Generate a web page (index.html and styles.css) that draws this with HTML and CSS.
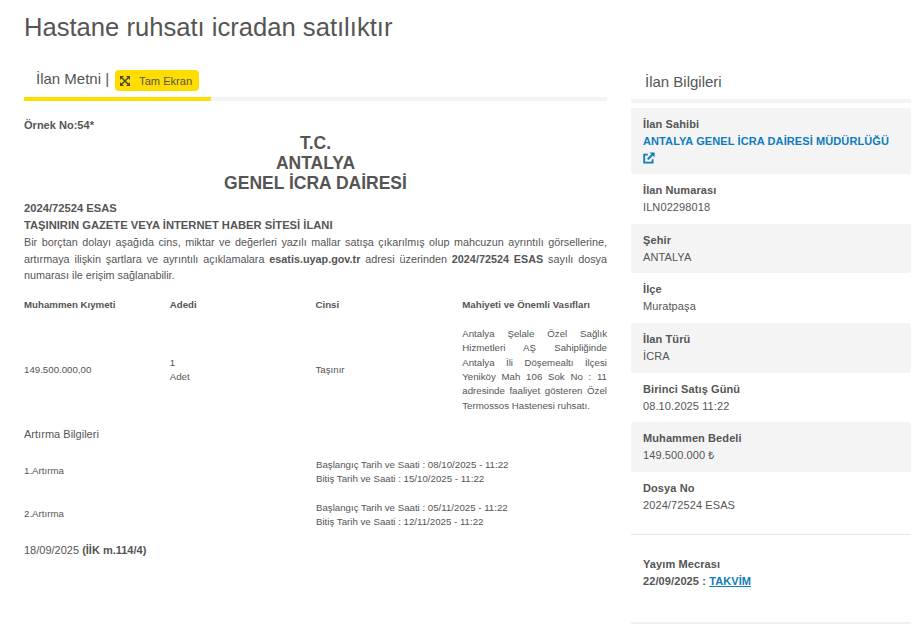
FILE: index.html
```html
<!DOCTYPE html>
<html lang="tr">
<head>
    <meta charset="UTF-8">
    <title>Hastane ruhsatı icradan satılıktır</title>
    <link rel="stylesheet" href="styles.css">
</head>
<body>
    <h1 class="page-title">Hastane ruhsatı icradan satılıktır</h1>
    <div class="layout">
        <main class="content">
            <div class="tabs">
                <div class="tab">
                    <span class="tab-label">İlan Metni |</span>
                    <button class="fullscreen-btn">
                        <svg class="fullscreen-icon" viewBox="0 0 12 12" width="12" height="12">
                            <path d="M1 1h4L1 5zM11 1v4L7 1zM1 11V7l4 4zM11 11H7l4-4z"/>
                            <path d="M2.5 2.5l7 7M9.5 2.5l-7 7" fill="none" stroke="#4d4a2a" stroke-width="1.5"/>
                        </svg>
                        Tam Ekran
                    </button>
                </div>
            </div>

            <div class="notice">
                <p class="sample-no">Örnek No:54*</p>
                <div class="notice-head">T.C.<br>ANTALYA<br>GENEL İCRA DAİRESİ</div>
                <p class="notice-line"><b>2024/72524 ESAS</b></p>
                <p class="notice-line"><b>TAŞINIRIN GAZETE VEYA İNTERNET HABER SİTESİ İLANI</b></p>
                <p class="notice-text">Bir borçtan dolayı aşağıda cins, miktar ve değerleri yazılı mallar satışa çıkarılmış olup mahcuzun ayrıntılı görsellerine, artırmaya ilişkin şartlara ve ayrıntılı açıklamalara <b>esatis.uyap.gov.tr</b> adresi üzerinden <b>2024/72524 ESAS</b> sayılı dosya numarası ile erişim sağlanabilir.</p>

                <table class="goods">
                    <tr class="goods-head">
                        <th>Muhammen Kıymeti</th>
                        <th>Adedi</th>
                        <th>Cinsi</th>
                        <th>Mahiyeti ve Önemli Vasıfları</th>
                    </tr>
                    <tr>
                        <td>149.500.000,00</td>
                        <td>1<br>Adet</td>
                        <td>Taşınır</td>
                        <td class="justify">Antalya Şelale Özel Sağlık Hizmetleri AŞ Sahipliğinde Antalya İli Döşemealtı İlçesi Yeniköy Mah 106 Sok No : 11 adresinde faaliyet gösteren Özel Termossos Hastenesi ruhsatı.</td>
                    </tr>
                </table>

                <p class="rounds-title">Artırma Bilgileri</p>
                <table class="rounds">
                    <tr>
                        <td class="round-name">1.Artırma</td>
                        <td>Başlangıç Tarih ve Saati : 08/10/2025 - 11:22<br>Bitiş Tarih ve Saati : 15/10/2025 - 11:22</td>
                    </tr>
                    <tr>
                        <td class="round-name">2.Artırma</td>
                        <td>Başlangıç Tarih ve Saati : 05/11/2025 - 11:22<br>Bitiş Tarih ve Saati : 12/11/2025 - 11:22</td>
                    </tr>
                </table>
                <p class="notice-date">18/09/2025 <b>(İİK m.114/4)</b></p>
            </div>
        </main>

        <aside class="sidebar">
            <h2 class="sidebar-title">İlan Bilgileri</h2>
            <div class="info-list">
                <div class="info-row shaded">
                    <div class="info-label">İlan Sahibi</div>
                    <a class="owner-link" href="#">ANTALYA GENEL İCRA DAİRESİ MÜDÜRLÜĞÜ
                        <svg class="link-icon" viewBox="0 0 12 12" width="12" height="12">
                            <path d="M9.6 7.2v3.4H1.2V2.6h3.6" fill="none" stroke="#0f7cbc" stroke-width="1.8"/>
                            <path d="M6.6.4h5v5L9.8 3.6 5.6 8 4 6.4l4.4-4.2z" fill="#0f7cbc"/>
                        </svg>
                    </a>
                </div>
                <div class="info-row">
                    <div class="info-label">İlan Numarası</div>
                    <div>ILN02298018</div>
                </div>
                <div class="info-row shaded">
                    <div class="info-label">Şehir</div>
                    <div>ANTALYA</div>
                </div>
                <div class="info-row">
                    <div class="info-label">İlçe</div>
                    <div>Muratpaşa</div>
                </div>
                <div class="info-row shaded">
                    <div class="info-label">İlan Türü</div>
                    <div>İCRA</div>
                </div>
                <div class="info-row">
                    <div class="info-label">Birinci Satış Günü</div>
                    <div>08.10.2025 11:22</div>
                </div>
                <div class="info-row shaded">
                    <div class="info-label">Muhammen Bedeli</div>
                    <div>149.500.000 ₺</div>
                </div>
                <div class="info-row">
                    <div class="info-label">Dosya No</div>
                    <div>2024/72524 ESAS</div>
                </div>
            </div>
            <div class="media">
                <div class="info-label">Yayım Mecrası</div>
                <div class="media-date">22/09/2025 : <a href="#">TAKVİM</a></div>
            </div>
        </aside>
    </div>
</body>
</html>
```

FILE: styles.css
```css
* {
    margin: 0;
    padding: 0;
    box-sizing: border-box;
}

body {
    font-family: "Liberation Sans", Arial, sans-serif;
    font-size: 12px;
    color: #555;
    background: #fff;
    height: 625px;
    overflow: hidden;
    padding: 12px 4px 0 24px;
}

.page-title {
    font-size: 25.6px;
    font-weight: 400;
    line-height: 30px;
}

.layout {
    display: flex;
    gap: 24px;
    margin-top: 18px;
}

.content {
    width: 583px;
}

.sidebar {
    width: 280px;
}

/* Tabs */
.tabs {
    border-bottom: 4px solid #f4f4f4;
    height: 41px;
}

.tab {
    width: 187px;
    height: 41px;
    border-bottom: 4px solid #ffdd00;
    padding: 0 0 0 12px;
    display: flex;
    align-items: flex-start;
    gap: 6px;
}

.tab-label {
    font-size: 15px;
    line-height: 20px;
    margin-top: 9px;
}

.fullscreen-btn {
    font-family: inherit;
    font-size: 11.1px;
    color: #555;
    background: #ffdd00;
    border: 0;
    border-radius: 4px;
    height: 21px;
    width: 84px;
    margin-top: 10px;
    display: flex;
    align-items: center;
    gap: 8px;
    padding-left: 4px;
}

.fullscreen-icon {
    fill: #4d4a2a;
}

/* Notice body */
.notice {
    padding-top: 17px;
    font-size: 11px;
}

.sample-no {
    font-weight: 700;
    font-size: 11px;
    line-height: 14px;
    letter-spacing: 0.02px;
}

.notice-head {
    font-size: 17.5px;
    font-weight: 700;
    text-align: center;
    line-height: 20px;
    margin-top: 1px;
}

.notice-line {
    line-height: 17px;
    font-size: 11.2px;
}

.notice-head + .notice-line {
    margin-top: 7px;
}

.notice-text {
    font-size: 10.8px;
    line-height: 16.6px;
    text-align: justify;
}

.goods, .rounds {
    width: 100%;
    border-collapse: collapse;
    table-layout: fixed;
    font-size: 9.7px;
    line-height: 14.4px;
}

.goods {
    margin-top: 9px;
}

.goods th {
    font-weight: 700;
    text-align: left;
    height: 25px;
}

.goods td {
    padding: 9px 0 14px 0;
}

.goods td:last-child {
    padding-left: 1px;
}

.goods th:last-child {
    padding-left: 1px;
}

.justify {
    text-align: justify;
}

.rounds-title {
    font-size: 11px;
    line-height: 14px;
    letter-spacing: 0.02px;
}

.rounds {
    margin-top: 9px;
    line-height: 13.6px;
}

.rounds td {
    height: 43px;
}

.round-name {
    width: 292px;
    padding-bottom: 1px;
}

.notice-date {
    font-size: 11px;
    margin-top: 8px;
}

/* Sidebar */
.sidebar-title {
    font-size: 15px;
    font-weight: 400;
    line-height: 20px;
    padding: 12px 0 0 14px;
    height: 43px;
    border-bottom: 4px solid #f4f4f4;
}

.info-list {
    margin-top: 5px;
    font-size: 11px;
    letter-spacing: 0.1px;
}

.info-row {
    padding: 8px 12px 0;
    height: 49.6px;
    line-height: 17px;
}

.info-row:first-child {
    height: 66.3px;
}

.shaded {
    background: #f4f4f4;
    border-radius: 2px;
}

.info-label {
    font-weight: 700;
}

.owner-link {
    color: #0f7cbc;
    font-weight: 700;
    text-decoration: none;
}

.link-icon {
    display: block;
    margin-top: 2px;
}

.media {
    margin-top: 13px;
    border-top: 1px solid #e6e6e6;
    border-bottom: 2px solid #f0f0f0;
    height: 90px;
    padding: 21px 12px 0;
    font-size: 11px;
    line-height: 17px;
    letter-spacing: 0.1px;
}

.media-date {
    font-weight: 700;
}

.media-date a {
    color: #0f7cbc;
}
```
